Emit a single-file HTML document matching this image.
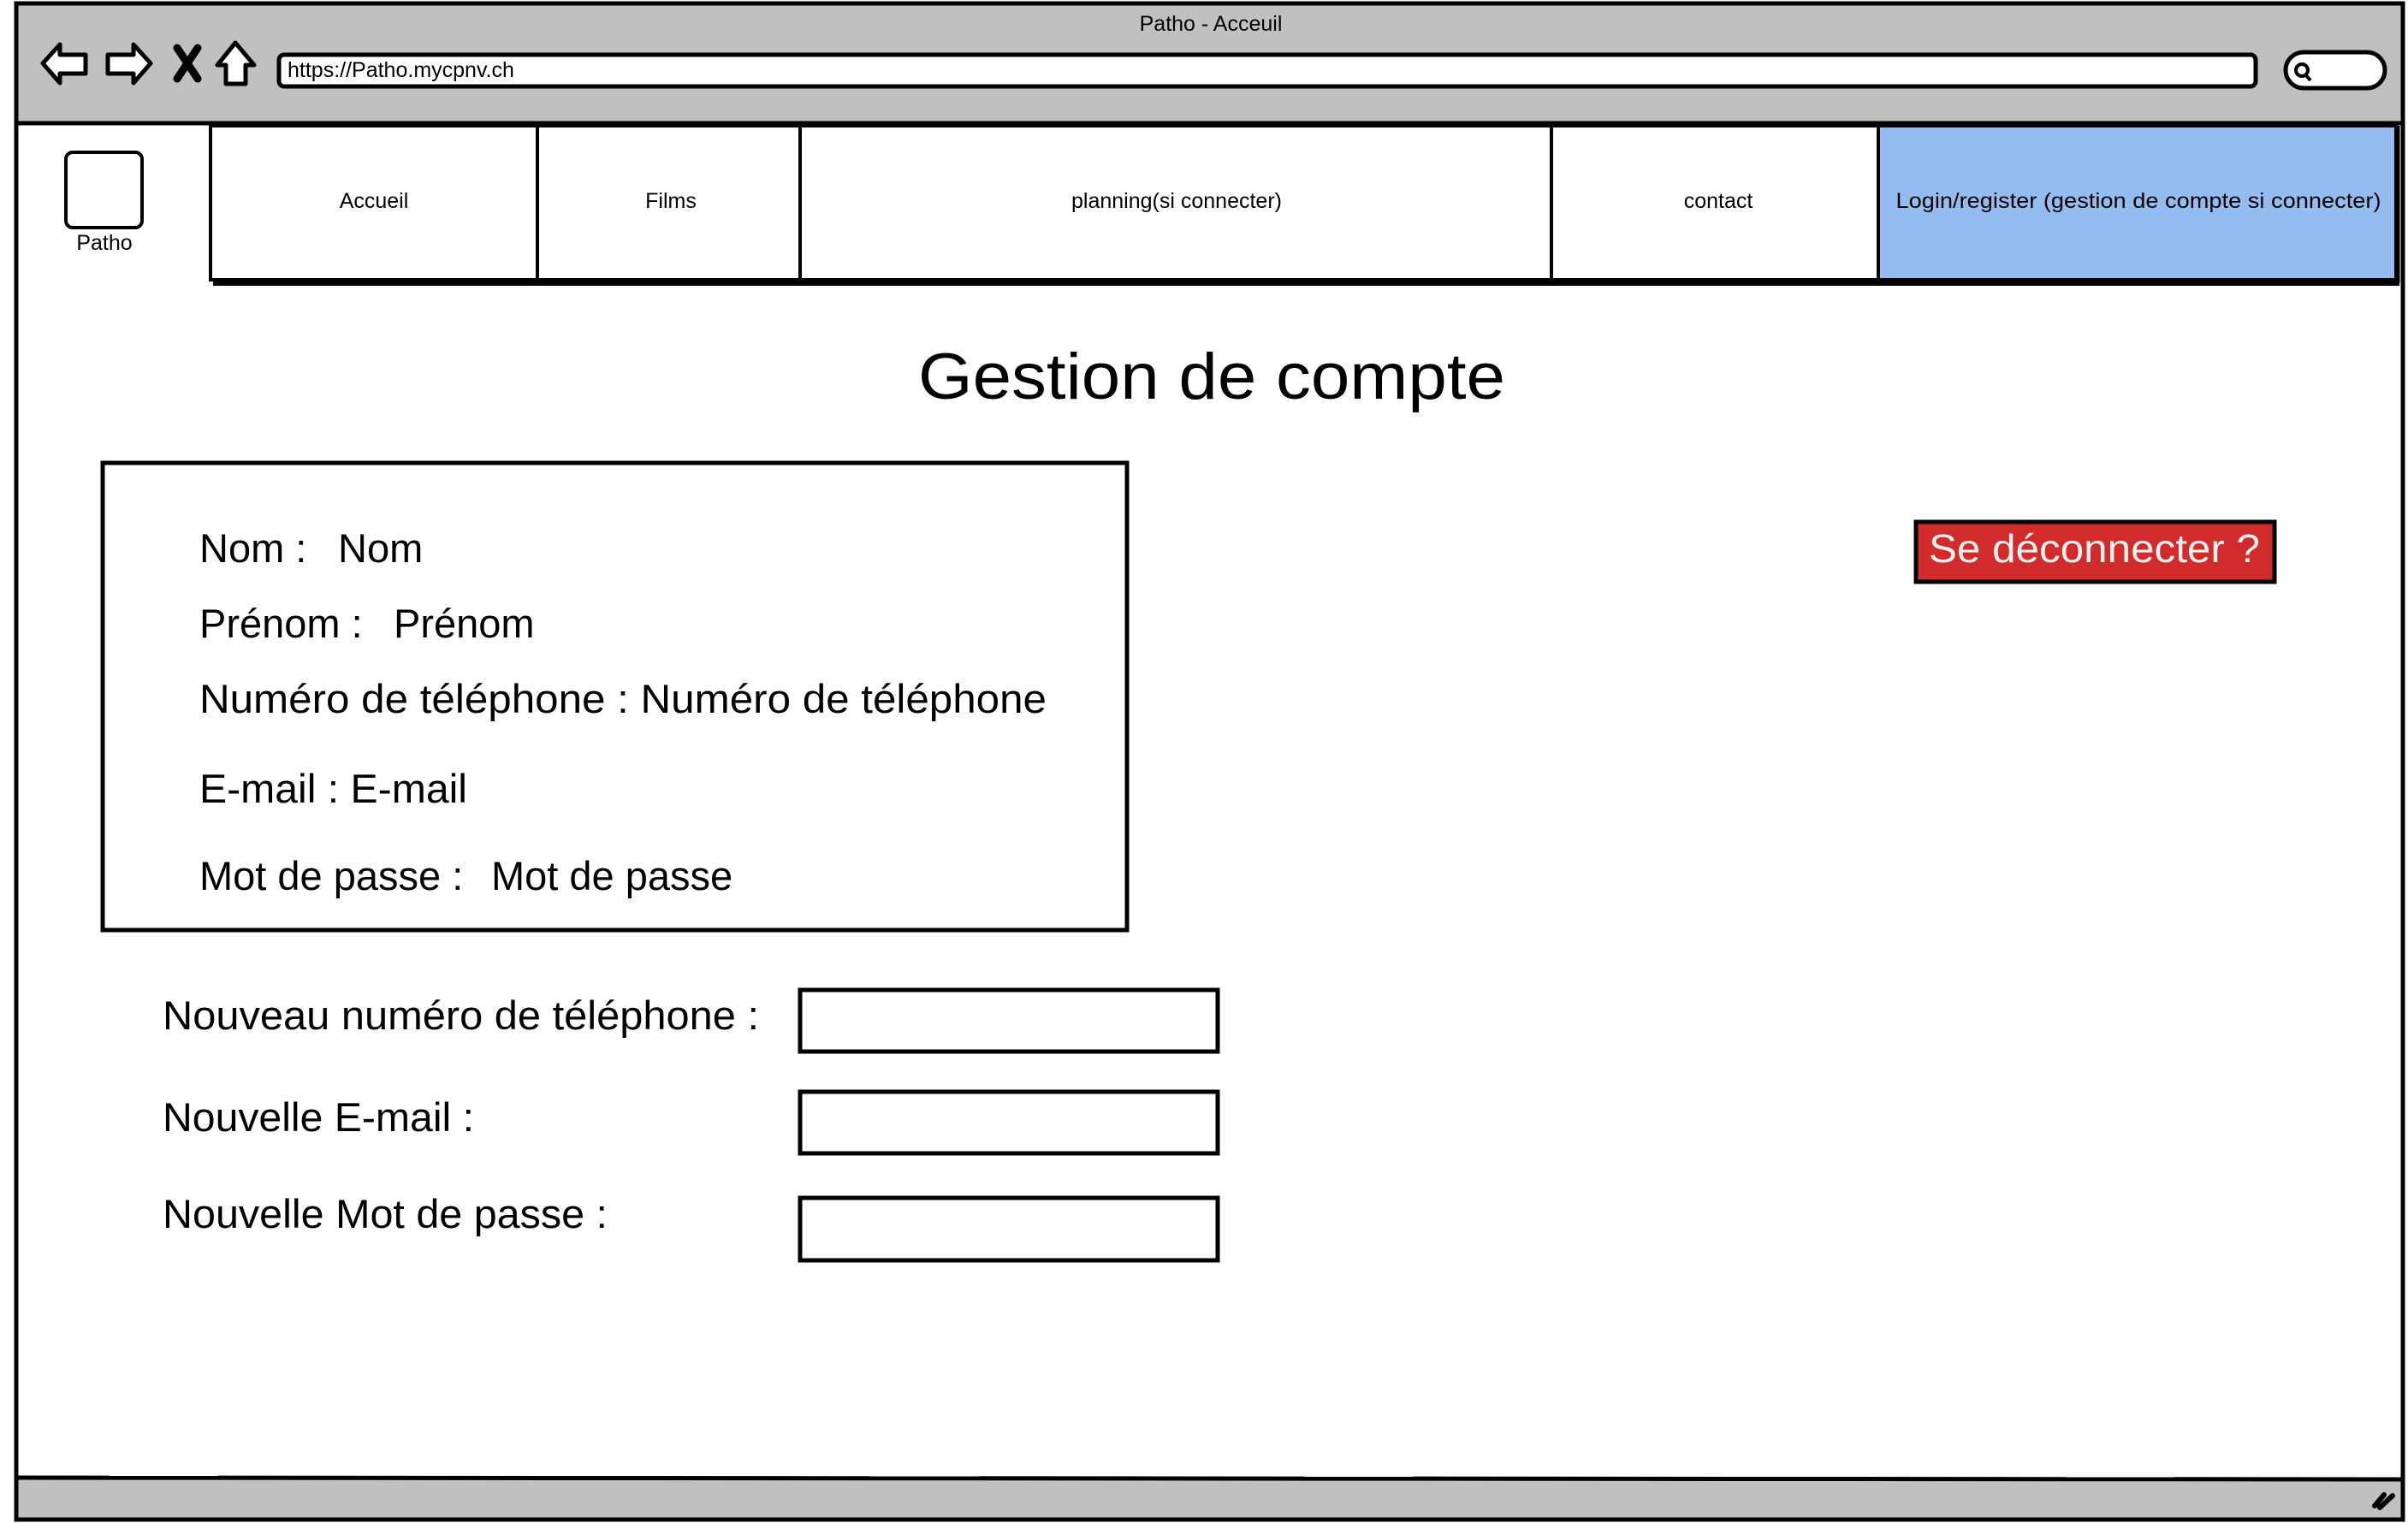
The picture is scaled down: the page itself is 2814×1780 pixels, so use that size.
<!DOCTYPE html>
<html><head><meta charset="utf-8"><style>
html,body{margin:0;padding:0;background:#fff;}
svg{display:block;}
text{font-family:"Liberation Sans",sans-serif;fill:#000;}
</style></head><body>
<svg width="2814" height="1780" viewBox="0 0 2814 1780" xmlns="http://www.w3.org/2000/svg">
<rect x="0" y="0" width="2814" height="1780" fill="#fff"/>
<rect x="19" y="4" width="2789" height="141" fill="#c0c0c0"/>
<rect x="19" y="1727" width="2789" height="49" fill="#c0c0c0"/>
<rect x="19" y="4" width="2789" height="1772" fill="none" stroke="#000" stroke-width="5"/>
<line x1="19" y1="144" x2="2808" y2="144" stroke="#000" stroke-width="5"/>
<line x1="19" y1="1727" x2="2808" y2="1729" stroke="#000" stroke-width="5"/>
<text x="1415" y="36" font-size="25" text-anchor="middle">Patho - Acceuil</text>
<path d="M50 74 L70 52 L70 64 L100 64 L100 86 L70 86 L70 97 Z" fill="#fff" stroke="#000" stroke-width="5" stroke-linejoin="round"/>
<path d="M176 74 L156 52 L156 64 L126 64 L126 86 L156 86 L156 97 Z" fill="#fff" stroke="#000" stroke-width="5" stroke-linejoin="round"/>
<path d="M207 56 L231 92 M231 56 L207 92" stroke="#000" stroke-width="9" stroke-linecap="round"/>
<path d="M275 50 L297 76 L287 76 L287 98 L264 98 L264 76 L254 76 Z" fill="#fff" stroke="#000" stroke-width="5" stroke-linejoin="round"/>
<rect x="326" y="64" width="2310" height="37" rx="6" fill="#fff" stroke="#000" stroke-width="5"/>
<text x="336" y="90" font-size="25">https://Patho.mycpnv.ch</text>
<rect x="2671" y="61" width="116" height="42" rx="21" fill="#fff" stroke="#000" stroke-width="5"/>
<circle cx="2690" cy="82" r="7" fill="none" stroke="#000" stroke-width="4"/>
<line x1="2694" y1="87" x2="2700" y2="94" stroke="#000" stroke-width="4"/>
<rect x="77" y="178" width="89" height="88" rx="8" fill="#fff" stroke="#000" stroke-width="4"/>
<text x="122" y="292" font-size="25" text-anchor="middle">Patho</text>
<rect x="2195" y="147" width="605" height="180" fill="#94bcf0"/>
<line x1="249" y1="331" x2="2804" y2="331" stroke="#000" stroke-width="6"/>
<rect x="246" y="147" width="2554" height="180" fill="none" stroke="#000" stroke-width="4"/>
<line x1="2802" y1="147" x2="2802" y2="331" stroke="#000" stroke-width="5"/>
<line x1="628" y1="147" x2="628" y2="327" stroke="#000" stroke-width="4"/>
<line x1="935" y1="147" x2="935" y2="327" stroke="#000" stroke-width="4"/>
<line x1="1813" y1="147" x2="1813" y2="327" stroke="#000" stroke-width="4"/>
<line x1="2195" y1="147" x2="2195" y2="327" stroke="#000" stroke-width="4"/>
<text x="437" y="243" font-size="25" text-anchor="middle">Accueil</text>
<text x="784" y="243" font-size="25" text-anchor="middle">Films</text>
<text x="1375" y="243" font-size="25" text-anchor="middle">planning(si connecter)</text>
<text x="2008" y="243" font-size="25" text-anchor="middle">contact</text>
<text x="2499" y="243" font-size="25" text-anchor="middle" textLength="567" lengthAdjust="spacingAndGlyphs">Login/register (gestion de compte si connecter)</text>
<text x="1073" y="466" font-size="76" textLength="686" lengthAdjust="spacingAndGlyphs">Gestion de compte</text>
<rect x="120" y="541" width="1197" height="546" fill="#fff" stroke="#000" stroke-width="5"/>
<text x="233" y="657" font-size="47">Nom :</text>
<text x="395" y="657" font-size="47">Nom</text>
<text x="233" y="745" font-size="47">Prénom :</text>
<text x="460" y="745" font-size="47">Prénom</text>
<text x="233" y="833" font-size="47" textLength="990" lengthAdjust="spacingAndGlyphs">Numéro de téléphone : Numéro de téléphone</text>
<text x="233" y="938" font-size="47" textLength="313" lengthAdjust="spacingAndGlyphs">E-mail : E-mail</text>
<text x="233" y="1040" font-size="47">Mot de passe :</text>
<text x="574" y="1040" font-size="47">Mot de passe</text>
<text x="190" y="1203" font-size="47" textLength="697" lengthAdjust="spacingAndGlyphs">Nouveau numéro de téléphone :</text>
<text x="190" y="1322" font-size="47" textLength="364" lengthAdjust="spacingAndGlyphs">Nouvelle E-mail :</text>
<text x="190" y="1435" font-size="47" textLength="520" lengthAdjust="spacingAndGlyphs">Nouvelle Mot de passe :</text>
<rect x="935" y="1157" width="488" height="72" fill="#fff" stroke="#000" stroke-width="5"/>
<rect x="935" y="1276" width="488" height="72" fill="#fff" stroke="#000" stroke-width="5"/>
<rect x="935" y="1400" width="488" height="73" fill="#fff" stroke="#000" stroke-width="5"/>
<rect x="2239" y="610" width="419" height="70" fill="#d12b2b" stroke="#000" stroke-width="5"/>
<text x="2254" y="657" font-size="46" style="fill:#f0f0f0" textLength="387" lengthAdjust="spacingAndGlyphs">Se déconnecter ?</text>
<path d="M2775 1760 L2786 1747 M2781 1762 L2796 1748" stroke="#000" stroke-width="6" stroke-linecap="round"/>
</svg>
</body></html>
